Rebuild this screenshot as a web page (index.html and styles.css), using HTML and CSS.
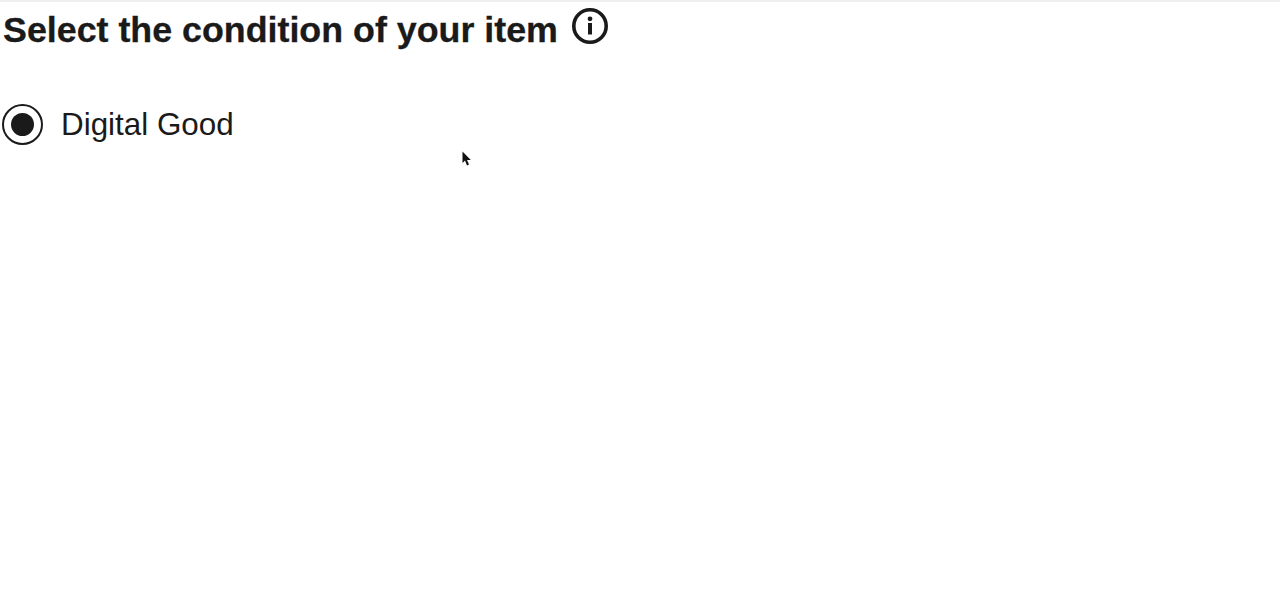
FILE: index.html
```html
<!doctype html>
<html lang="en">
<head>
	<meta charset="UTF-8">
	<title>Item condition</title>
	<link rel="stylesheet" href="styles.css">
</head>
<body>
	<div class="top"></div>
	<div class="title">
		<h1>Select the condition of your item</h1>
		<svg class="info" width="38" height="38" viewBox="0 0 38 38">
			<circle cx="19" cy="19" r="16.2" fill="none" stroke="#1a1a1a" stroke-width="3.6"/>
			<circle cx="19" cy="11.8" r="2.4" fill="#1a1a1a"/>
			<rect x="17" y="16" width="4" height="11.5" fill="#1a1a1a"/>
		</svg>
	</div>
	<label class="option">
		<span class="radio"><span class="dot"></span></span>
		<span class="text">Digital Good</span>
	</label>
	<svg class="cursor" width="10" height="16" viewBox="0 0 10 16">
		<path d="M0.5 0.5V12L3 9.6L5 14.5L7 13.6L5 9H8.8z" fill="#111"/>
	</svg>
</body>
</html>
```

FILE: styles.css
```css
body { margin:0; background:#fff; color:#1a1a1a; font-family:"Liberation Sans", Arial, sans-serif; }
.top { height:2px; background:#f1efee; }
.title { display:flex; align-items:flex-start; gap:13px; padding:5px 0 0 3px; }
h1 { margin:0; padding-top:1px; font-size:35.8px; line-height:44px; font-weight:bold; -webkit-text-stroke:.3px #1a1a1a; }
.info { display:block; }
.option { display:flex; align-items:center; gap:18px; margin-top:52px; padding-left:2px; }
.radio { display:flex; align-items:center; justify-content:center; box-sizing:border-box; width:41px; height:41px; border:2px solid #1a1a1a; border-radius:50%; }
.dot { width:23px; height:23px; border-radius:50%; background:#1a1a1a; }
.text { font-size:31.4px; line-height:41px; }
.cursor { position:absolute; left:462px; top:151px; }
```
